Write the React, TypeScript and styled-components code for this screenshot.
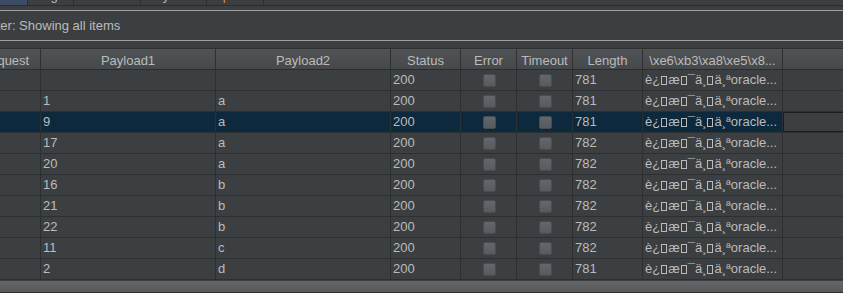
import styled, { createGlobalStyle } from "styled-components";

const GlobalStyle = createGlobalStyle`
  html, body {
    margin: 0;
    padding: 0;
    background: #3c3f41;
    overflow: hidden;
  }
  body {
    font-family: "Liberation Sans", Arial, sans-serif;
    font-size: 13px;
    color: #bbbbbb;
  }
`;

type Column = {
  key: string;
  title: string;
  width: number;
  kind?: "check" | "garbled";
};

const columns: Column[] = [
  { key: "req", title: "Request", width: 71 },
  { key: "p1", title: "Payload1", width: 175 },
  { key: "p2", title: "Payload2", width: 175 },
  { key: "status", title: "Status", width: 70 },
  { key: "error", title: "Error", width: 56, kind: "check" },
  { key: "timeout", title: "Timeout", width: 56, kind: "check" },
  { key: "length", title: "Length", width: 70 },
  { key: "body", title: "\\xe6\\xb3\\xa8\\xe5\\x8...", width: 140, kind: "garbled" },
  { key: "comment", title: "", width: 200 },
];

const rows = [
  { p1: "", p2: "", length: "781" },
  { p1: "1", p2: "a", length: "781" },
  { p1: "9", p2: "a", length: "781", selected: true },
  { p1: "17", p2: "a", length: "782" },
  { p1: "20", p2: "a", length: "782" },
  { p1: "16", p2: "b", length: "782" },
  { p1: "21", p2: "b", length: "782" },
  { p1: "22", p2: "b", length: "782" },
  { p1: "11", p2: "c", length: "782" },
  { p1: "2", p2: "d", length: "781" },
];

const tabs = [
  { label: "Results", width: 28, active: true },
  { label: "Target", width: 46 },
  { label: "Positions", width: 67 },
  { label: "Payloads", width: 66 },
  { label: "Options", width: 57, warn: true },
];

// bytes that Latin-1 can't show come out as empty boxes
const garbled: (string | null)[] = ["è¿", null, "æ", null, "¯ä¸", null, "ä¸ªoracle..."];

function GarbledText() {
  return (
    <>
      {garbled.map((part, i) =>
        part === null ? <MissingGlyph key={i} /> : <span key={i}>{part}</span>
      )}
    </>
  );
}

export default function App() {
  return (
    <>
      <GlobalStyle />
      <Frame>
        <TabStrip>
          {tabs.map((t) => (
            <Tab key={t.label} $width={t.width} $active={!!t.active}>
              <TabLabel $warn={!!t.warn}>{t.label}</TabLabel>
            </Tab>
          ))}
        </TabStrip>
        <FilterBar>
          <FilterText>Filter: Showing all items</FilterText>
        </FilterBar>
        <TableViewport>
          <Table>
            <HeaderRow>
              {columns.map((c) => (
                <HeaderCell key={c.key} $width={c.width}>
                  {c.title}
                </HeaderCell>
              ))}
            </HeaderRow>
            {rows.map((r, i) => (
              <Row key={i} $selected={!!r.selected}>
                {columns.map((c) => {
                  if (c.key === "comment") {
                    return <Cell key={c.key} $width={c.width} $focused={!!r.selected} />;
                  }
                  let content: React.ReactNode = null;
                  if (c.kind === "check") content = <CheckBox />;
                  else if (c.kind === "garbled") content = <GarbledText />;
                  else if (c.key === "status") content = "200";
                  else if (c.key === "p1") content = r.p1;
                  else if (c.key === "p2") content = r.p2;
                  else if (c.key === "length") content = r.length;
                  return (
                    <Cell key={c.key} $width={c.width} $center={c.kind === "check"}>
                      {content}
                    </Cell>
                  );
                })}
              </Row>
            ))}
          </Table>
        </TableViewport>
        <ScrollBar />
      </Frame>
    </>
  );
}

const Frame = styled.div`
  width: 843px;
  height: 293px;
  overflow: hidden;
  display: flex;
  flex-direction: column;
`;

const TabStrip = styled.div`
  flex: 0 0 5px;
  display: flex;
  border-bottom: 1px solid #2b2d2f;
  margin-bottom: 4px;
  overflow: hidden;
`;

const Tab = styled.div<{ $width: number; $active: boolean }>`
  box-sizing: border-box;
  flex: 0 0 ${(p) => p.$width}px;
  height: 5px;
  overflow: hidden;
  border-right: 1px solid #2b2d2f;
  background: ${(p) => (p.$active ? "#3d4b66" : "#3c3f41")};
  display: flex;
  align-items: flex-start;
  justify-content: center;
`;

const TabLabel = styled.span<{ $warn: boolean }>`
  display: block;
  flex: 0 0 auto;
  height: 13px;
  line-height: 13px;
  margin-top: -11px;
  white-space: nowrap;
  color: ${(p) => (p.$warn ? "#e08a3a" : "#bbbbbb")};
`;

const FilterBar = styled.div`
  flex: 0 0 29px;
  border-top: 1px solid #a0a0a0;
  border-bottom: 1px solid #a0a0a0;
  overflow: hidden;
  margin-bottom: 7px;
`;

const FilterText = styled.div`
  line-height: 29px;
  margin-left: -17px;
  white-space: nowrap;
`;

const TableViewport = styled.div`
  flex: 0 0 auto;
  overflow: hidden;
`;

const Table = styled.div`
  display: flex;
  flex-direction: column;
  margin-left: -30px;
  width: max-content;
`;

const HeaderRow = styled.div`
  display: flex;
  height: 22px;
  box-sizing: border-box;
  border-top: 1px solid #2e3032;
  border-bottom: 1px solid #2b2d2f;
  background: linear-gradient(to bottom, #505356 0%, #46494c 100%);
`;

const HeaderCell = styled.div<{ $width: number }>`
  box-sizing: border-box;
  flex: 0 0 ${(p) => p.$width}px;
  border-right: 1px solid #2d2f31;
  padding: 4px 4px 0;
  line-height: 16px;
  text-align: center;
  white-space: nowrap;
  overflow: hidden;
  color: #bbbbbb;
`;

const Row = styled.div<{ $selected: boolean }>`
  display: flex;
  height: 21px;
  box-sizing: border-box;
  border-bottom: 1px solid #2d2f31;
  background: ${(p) => (p.$selected ? "#0d293e" : "#3c3f41")};
`;

const Cell = styled.div<{ $width: number; $center?: boolean; $focused?: boolean }>`
  box-sizing: border-box;
  flex: 0 0 ${(p) => p.$width}px;
  height: 20px;
  border-right: 1px solid #2d2f31;
  padding-left: 2px;
  line-height: 20px;
  white-space: nowrap;
  overflow: hidden;
  display: flex;
  align-items: center;
  justify-content: ${(p) => (p.$center ? "center" : "flex-start")};
  ${(p) =>
    p.$focused &&
    `
    background: #3c3f41;
    border: 1px solid #1c1c1c;
  `}
`;

const CheckBox = styled.span`
  display: block;
  width: 13px;
  height: 13px;
  box-sizing: border-box;
  border-radius: 2px;
  border: 1px solid #4a4d50;
  background: linear-gradient(to bottom, #63666a 0%, #585b5e 100%);
`;

const MissingGlyph = styled.span`
  display: inline-block;
  box-sizing: border-box;
  width: 6px;
  height: 9px;
  margin: 1px 1px 0;
  border: 1px solid #bbbbbb;
`;

const ScrollBar = styled.div`
  flex: 0 0 11px;
  margin-top: 1px;
  border-bottom: 1px solid #2b2d2f;
  background: linear-gradient(to bottom, #646669 0%, #57595c 100%);
`;
